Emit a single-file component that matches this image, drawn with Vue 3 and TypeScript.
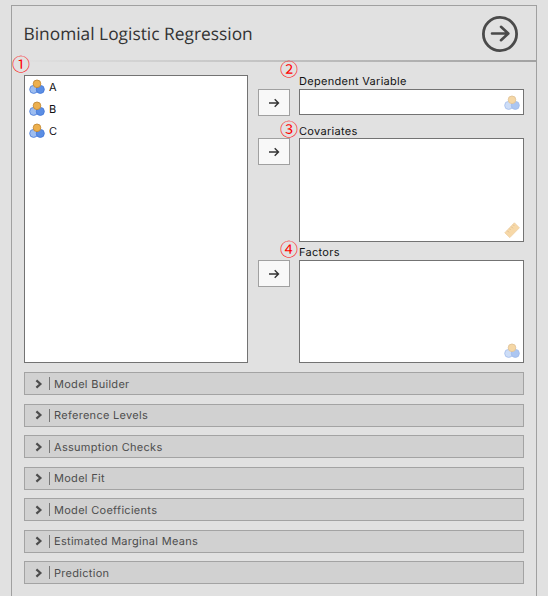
<script setup lang="ts">
import { ref } from 'vue'

type Kind = 'nominal' | 'continuous'

interface Target {
  label: string
  kind: Kind
  size: string
  mark: string
}

const variables = ref<string[]>(['A', 'B', 'C'])

const targets: Target[] = [
  { label: 'Dependent Variable', kind: 'nominal', size: 'single', mark: '②' },
  { label: 'Covariates', kind: 'continuous', size: 'tall', mark: '③' },
  { label: 'Factors', kind: 'nominal', size: 'last', mark: '④' },
]

const sections: string[] = [
  'Model Builder',
  'Reference Levels',
  'Assumption Checks',
  'Model Fit',
  'Model Coefficients',
  'Estimated Marginal Means',
  'Prediction',
]
</script>

<template>
  <main class="panel">
    <header class="header">
      <h1 class="title">Binomial Logistic Regression</h1>
      <button class="go" type="button" aria-label="Close options">
        <svg width="38" height="38" viewBox="0 0 38 38" fill="none" stroke="#4a4a4a">
          <circle cx="19" cy="19" r="16.6" stroke-width="2.8" />
          <path d="M11 18.5H27M20 11.8L27.3 18.5L20 25.2" stroke-width="2.6" stroke-linecap="round" stroke-linejoin="round" />
        </svg>
      </button>
    </header>
    <div class="rule"></div>

    <div class="body">
      <div class="assign">
        <div class="source">
          <span class="mark mark-source">①</span>
          <ul class="list">
            <li v-for="name in variables" :key="name" class="variable">
              <svg class="icon" width="16" height="16" viewBox="0 0 16 16">
                <circle cx="4.7" cy="10.4" r="4" fill="#9dbdf0" stroke="#5585dc" stroke-width=".9" />
                <circle cx="11.3" cy="10.4" r="4" fill="#5b8ee4" stroke="#4679d8" stroke-width=".9" />
                <circle cx="8" cy="4.8" r="3.8" fill="#edb04e" stroke="#c48a35" stroke-width=".9" />
              </svg>
              <span>{{ name }}</span>
            </li>
          </ul>
        </div>

        <div class="targets">
          <div v-for="t in targets" :key="t.label" class="target" :class="t.size">
            <button class="move" type="button" :aria-label="t.label">
              <svg width="12" height="12" viewBox="0 0 12 12" fill="none" stroke="#333" stroke-width="1.4">
                <path d="M1 6H10.5M6.7 2.2L10.5 6L6.7 9.8" />
              </svg>
            </button>
            <div class="field">
              <span class="mark">{{ t.mark }}</span>
              <div class="label">{{ t.label }}</div>
              <div class="drop">
                <svg v-if="t.kind === 'nominal'" class="icon faded" width="16" height="16" viewBox="0 0 16 16">
                  <circle cx="4.7" cy="10.4" r="4" fill="#9dbdf0" stroke="#5585dc" stroke-width=".9" />
                  <circle cx="11.3" cy="10.4" r="4" fill="#5b8ee4" stroke="#4679d8" stroke-width=".9" />
                  <circle cx="8" cy="4.8" r="3.8" fill="#edb04e" stroke="#c48a35" stroke-width=".9" />
                </svg>
                <svg v-else class="icon faded" width="16" height="16" viewBox="0 0 16 16">
                  <path d="M.8 10.8L10.4 .8L15.4 5.8L5.8 15.6Z" fill="#f0b252" stroke="#dda046" stroke-width=".8" />
                  <path d="M3.3 8.7L5 10.4M5.3 6.6L6.5 7.8M7.2 4.6L8.9 6.3M9.1 2.7L10.3 3.9" stroke="#b97a24" stroke-width=".9" />
                </svg>
              </div>
            </div>
          </div>
        </div>
      </div>

      <div class="sections">
        <button v-for="s in sections" :key="s" class="section" type="button">
          <svg class="chevron" width="8" height="10" viewBox="0 0 8 10" fill="none" stroke="#4d4d4d" stroke-width="2.2">
            <path d="M1.4 1.4L5.4 5L1.4 8.6" />
          </svg>
          <span class="bar"></span>
          <span>{{ s }}</span>
        </button>
      </div>
    </div>
  </main>
</template>

<style>
body {
  background: #e1e1e1;
}
</style>

<style scoped>
.panel {
  box-sizing: border-box;
  width: 526px;
  height: 591px;
  margin: 5px 0 0 11px;
  border: 1px solid #a0a0a0;
  border-bottom: 0;
  font-family: Inter, "Liberation Sans", sans-serif;
  font-size: 11px;
  letter-spacing: 0.29px;
  text-rendering: geometricPrecision;
  color: #111;
}
button {
  margin: 0;
  padding: 0;
  font: inherit;
  letter-spacing: inherit;
  text-rendering: inherit;
  border-radius: 0;
}
.header {
  display: flex;
  align-items: center;
  justify-content: space-between;
  height: 54px;
  padding: 0 17px 0 12px;
}
.title {
  margin: 2px 0 0 -0.5px;
  font: 400 17.35px/26px "Open Sans", sans-serif;
  letter-spacing: 0;
  color: #333;
}
.go {
  display: block;
  height: 38px;
  margin-top: 2px;
  border: 0;
  background: none;
}
.go svg {
  display: block;
}
.rule {
  height: 2px;
  background: linear-gradient(to right, #e1e1e1, #a2a2a2);
}
.body {
  padding: 13px 12px 0;
}
.assign {
  display: flex;
  gap: 10px;
}
.source {
  position: relative;
}
.list {
  box-sizing: border-box;
  width: 224px;
  height: 288px;
  margin: 0;
  padding: 0 4px;
  list-style: none;
  background: #fff;
  border: 1px solid #737373;
}
.variable {
  display: flex;
  align-items: center;
  gap: 4px;
  height: 22px;
  letter-spacing: 0;
}
.icon {
  display: block;
}
.targets {
  width: 266px;
}
.target {
  display: flex;
  align-items: flex-start;
  gap: 9px;
}
.single {
  height: 40px;
}
.move {
  display: flex;
  align-items: center;
  justify-content: center;
  box-sizing: border-box;
  width: 32px;
  height: 27px;
  background: #f8f8f8;
  border: 1px solid #a0a0a0;
}
.single .move {
  margin-top: 14px;
}
.tall .move {
  margin-top: 23px;
}
.last .move {
  margin-top: 18px;
}
.field {
  position: relative;
  width: 225px;
}
.label {
  height: 14px;
  line-height: 13px;
}
.tall .label {
  height: 15px;
  padding-top: 8px;
  line-height: 16px;
}
.last .label {
  height: 15px;
  padding-top: 3px;
  line-height: 15px;
}
.drop {
  display: flex;
  align-items: flex-end;
  justify-content: flex-end;
  box-sizing: border-box;
  height: 26px;
  padding: 0 3px 3px 0;
  background: #fff;
  border: 1px solid #737373;
}
.tall .drop {
  height: 104px;
}
.last .drop {
  height: 103px;
}
.faded {
  opacity: 0.5;
}
.mark {
  position: absolute;
  left: -19px;
  top: -16px;
  font: 350 18px/20px "Noto Sans CJK JP", sans-serif;
  letter-spacing: 0;
  color: #f00;
}
.tall .mark {
  top: 4px;
}
.last .mark {
  top: -3px;
}
.mark-source {
  left: -12px;
  top: -21px;
}
.sections {
  display: grid;
  gap: 8.5px;
  margin-top: 9px;
}
.section {
  display: flex;
  align-items: center;
  box-sizing: border-box;
  height: 23px;
  padding-left: 10px;
  color: #4d4d4d;
  background: #d1d1d1;
  border: 1px solid #a3a3a3;
}
.bar {
  width: 1px;
  height: 13px;
  margin: 0 4px 0 6px;
  background: #777;
}
</style>
